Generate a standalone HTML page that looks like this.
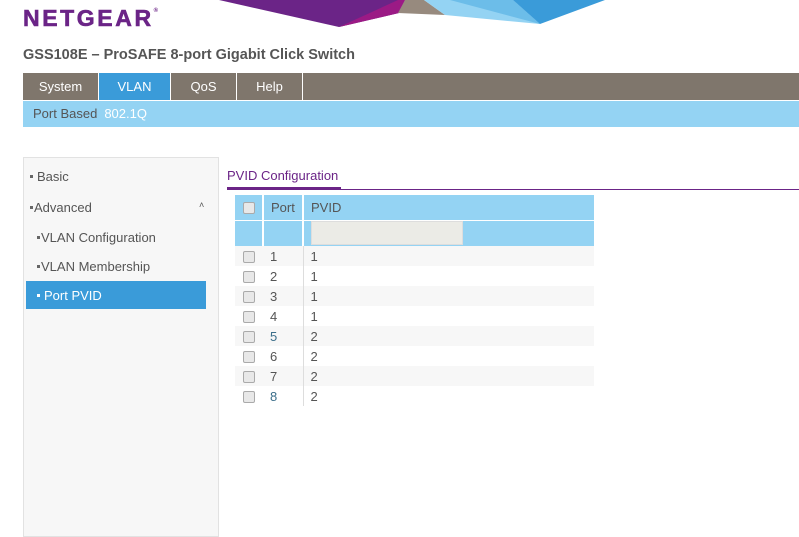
<!DOCTYPE html>
<html><head><meta charset="utf-8"><style>
*{margin:0;padding:0;box-sizing:border-box}
body{width:799px;height:531px;overflow:hidden;background:#fff;font-family:"Liberation Sans",Arial,sans-serif;position:relative;color:#555}
.abs{position:absolute}
.logo{left:23px;top:5px;font-size:23px;font-weight:bold;color:#6b2487;letter-spacing:2.6px;-webkit-text-stroke:0.6px #6b2487}
.logo sup{font-size:6px;vertical-align:top;position:relative;top:3px;-webkit-text-stroke:0}
.title{left:23px;top:47px;font-size:14.5px;font-weight:bold;color:#555}
.tabs{left:23px;top:73px;width:776px;height:27px;background:#7f766c}
.tab{position:absolute;top:0;height:27px;line-height:27px;text-align:center;color:#fff;font-size:13px;border-right:1px solid #fff}
.sub{left:23px;top:101px;width:776px;height:26px;background:#94d3f3;font-size:13px;line-height:26px}
.side{left:23px;top:157px;width:196px;height:380px;background:#f7f7f7;border:1px solid #e2e2e2}
.si{position:absolute;font-size:13px;color:#555}
.sq{display:inline-block;width:3px;height:3px;background:#666;vertical-align:middle;margin-right:4px;position:relative;top:-1px}
.act{left:26px;top:281px;width:180px;height:28px;background:#3a9bd9}
table{border-collapse:collapse;font-size:13px}
td{padding:0}
.cb{display:inline-block;width:12px;height:12px;border:1px solid #aaa;border-radius:2px;background:#e8e8e8;vertical-align:middle}
</style></head><body>
<svg class="abs" style="left:0;top:0" width="799" height="40">
<polygon points="219,0 339,27 399,13 405,0" fill="#6b2487"/>
<polygon points="339,27 399,13 405,0 398,0" fill="#9b1a85"/>
<polygon points="398,13 405,0 424,0 445,15" fill="#978a7e"/>
<polygon points="424,0 445,15 540,24 513,0" fill="#94d3f3"/>
<polygon points="450,0 540,24 513,0" fill="#6cbde9"/>
<polygon points="513,0 540,24 605,0" fill="#3a9bd9"/>
</svg>
<div class="abs logo">NETGEAR<sup>®</sup></div>
<div class="abs title">GSS108E – ProSAFE 8-port Gigabit Click Switch</div>
<div class="abs tabs">
<div class="tab" style="left:0;width:76px">System</div>
<div class="tab" style="left:76px;width:72px;background:#3a9bd9">VLAN</div>
<div class="tab" style="left:148px;width:66px">QoS</div>
<div class="tab" style="left:214px;width:66px">Help</div>
</div>
<div class="abs sub"><span style="margin-left:10px;color:#555">Port Based</span><span style="margin-left:7px;color:#fff">802.1Q</span></div>
<div class="abs side"></div>
<div class="abs act"></div>
<div class="si" style="left:30px;top:169px"><span class="sq"></span>Basic</div>
<div class="si" style="left:30px;top:200px"><span class="sq" style="margin-right:1px"></span>Advanced</div>
<div class="si" style="left:199px;top:200px;font-size:9px">˄</div>
<div class="si" style="left:37px;top:230px"><span class="sq" style="margin-right:1px"></span>VLAN Configuration</div>
<div class="si" style="left:37px;top:259px"><span class="sq" style="margin-right:1px"></span>VLAN Membership</div>
<div class="si" style="left:37px;top:288px;color:#fff"><span class="sq" style="background:#fff"></span>Port PVID</div>
<div class="abs" style="left:227px;top:168px;font-size:13px;color:#6b2487">PVID Configuration</div>
<div class="abs" style="left:227px;top:187px;width:114px;height:3px;background:#6b2487"></div>
<div class="abs" style="left:341px;top:189px;width:458px;height:1px;background:#6b2487"></div>
<div class="abs" style="left:235px;top:195px;width:359px">
<table style="width:359px">
<tr style="background:#94d3f3;height:25px"><td style="width:28px;text-align:center;border-right:2px solid #fff"><span class="cb"></span></td><td style="width:40px;padding-left:7px;border-right:2px solid #fff">Port</td><td style="padding-left:7px">PVID</td></tr>
<tr style="background:#94d3f3;height:26px;border-top:1px solid #fff"><td style="border-right:2px solid #fff"></td><td style="border-right:2px solid #fff"></td><td style="padding-left:7px"><div style="width:152px;height:24px;background:#ebebe6;border:1px solid #ddd"></div></td></tr>
<tr style="height:20px;background:#f7f7f7"><td style="text-align:center"><span class="cb"></span></td><td style="padding-left:7px;border-right:1px solid #ddd">1</td><td style="padding-left:7px">1</td></tr>
<tr style="height:20px"><td style="text-align:center"><span class="cb"></span></td><td style="padding-left:7px;border-right:1px solid #ddd">2</td><td style="padding-left:7px">1</td></tr>
<tr style="height:20px;background:#f7f7f7"><td style="text-align:center"><span class="cb"></span></td><td style="padding-left:7px;border-right:1px solid #ddd">3</td><td style="padding-left:7px">1</td></tr>
<tr style="height:20px"><td style="text-align:center"><span class="cb"></span></td><td style="padding-left:7px;border-right:1px solid #ddd">4</td><td style="padding-left:7px">1</td></tr>
<tr style="height:20px;background:#f7f7f7"><td style="text-align:center"><span class="cb"></span></td><td style="padding-left:7px;border-right:1px solid #ddd;color:#3b6e8a">5</td><td style="padding-left:7px">2</td></tr>
<tr style="height:20px"><td style="text-align:center"><span class="cb"></span></td><td style="padding-left:7px;border-right:1px solid #ddd">6</td><td style="padding-left:7px">2</td></tr>
<tr style="height:20px;background:#f7f7f7"><td style="text-align:center"><span class="cb"></span></td><td style="padding-left:7px;border-right:1px solid #ddd">7</td><td style="padding-left:7px">2</td></tr>
<tr style="height:20px"><td style="text-align:center"><span class="cb"></span></td><td style="padding-left:7px;border-right:1px solid #ddd;color:#3b6e8a">8</td><td style="padding-left:7px">2</td></tr>
</table></div>
</body></html>
